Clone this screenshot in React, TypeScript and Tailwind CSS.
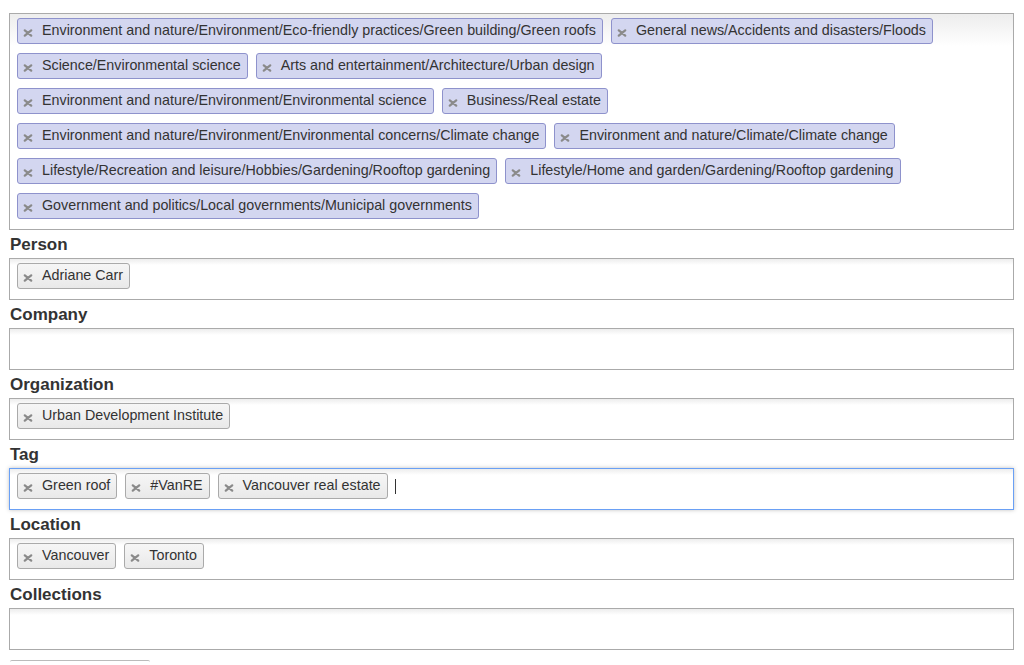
import React from "react"

const categories = [
  "Environment and nature/Environment/Eco-friendly practices/Green building/Green roofs",
  "General news/Accidents and disasters/Floods",
  "Science/Environmental science",
  "Arts and entertainment/Architecture/Urban design",
  "Environment and nature/Environment/Environmental science",
  "Business/Real estate",
  "Environment and nature/Environment/Environmental concerns/Climate change",
  "Environment and nature/Climate/Climate change",
  "Lifestyle/Recreation and leisure/Hobbies/Gardening/Rooftop gardening",
  "Lifestyle/Home and garden/Gardening/Rooftop gardening",
  "Government and politics/Local governments/Municipal governments",
]

type Field = { label: string; items: string[]; focused?: boolean }

const fields: Field[] = [
  { label: "Person", items: ["Adriane Carr"] },
  { label: "Company", items: [] },
  { label: "Organization", items: ["Urban Development Institute"] },
  { label: "Tag", items: ["Green roof", "#VanRE", "Vancouver real estate"], focused: true },
  { label: "Location", items: ["Vancouver", "Toronto"] },
  { label: "Collections", items: [] },
]

function CloseIcon() {
  return (
    <svg width="10" height="8" viewBox="0 0 10 8" className="shrink-0 mt-[4px]">
      <path d="M1.8 1.3 L8.2 6.7 M8.2 1.3 L1.8 6.7" stroke="#8a8a8a" strokeWidth="2.2" strokeLinecap="round" />
    </svg>
  )
}

function Chip({ text, tone }: { text: string; tone: "blue" | "grey" }) {
  const cls =
    tone === "blue"
      ? "border-[#8e92cc] bg-[#d3d6f0]"
      : "border-[#aaaaaa] bg-gradient-to-b from-[#f6f6f6] to-[#e9e9e9]"
  return (
    <div className={`flex h-[26px] items-center gap-[9px] rounded-[3px] border pl-[5px] pr-[6px] ${cls}`}>
      <CloseIcon />
      <span className="whitespace-nowrap text-[14.3px] text-[#333]">{text}</span>
    </div>
  )
}

function Box({ children, focused }: { children?: React.ReactNode; focused?: boolean }) {
  return (
    <div
      className={`flex min-h-[42px] flex-wrap content-start items-center gap-x-[8px] gap-y-[9px] border bg-gradient-to-b from-[#eeeeee] from-[1%] to-white to-[15%] px-[7px] pb-[10px] pt-[4px] ${
        focused ? "border-[#6aa0f5] shadow-[0_0_4px_rgba(0,0,0,0.25)]" : "border-[#aaaaaa]"
      }`}
    >
      {children}
    </div>
  )
}

export default function App() {
  return (
    <div className="min-h-screen bg-white pl-[9px] pr-[10px] pt-[13px] font-['Liberation_Sans',Arial,sans-serif]">
      {/* Category */}
      <Box>
        {categories.map((c) => (
          <Chip key={c} text={c} tone="blue" />
        ))}
      </Box>

      {fields.map((f) => (
        <div key={f.label}>
          <div className="pl-[1px] pt-[5px] pb-[4px] text-[17px] font-bold leading-[19px] text-[#333]">{f.label}</div>
          <Box focused={f.focused}>
            {f.items.map((i) => (
              <Chip key={i} text={i} tone="grey" />
            ))}
            {f.focused && <div className="ml-[-1px] h-[15px] w-[1px] bg-[#333]" />}
          </Box>
        </div>
      ))}

      {/* Save button (cut off) */}
      <div className="mt-[10px] ml-[1px] h-[24px] w-[140px] rounded-t-[2px] border-t border-[#bbbbbb]" />
    </div>
  )
}
